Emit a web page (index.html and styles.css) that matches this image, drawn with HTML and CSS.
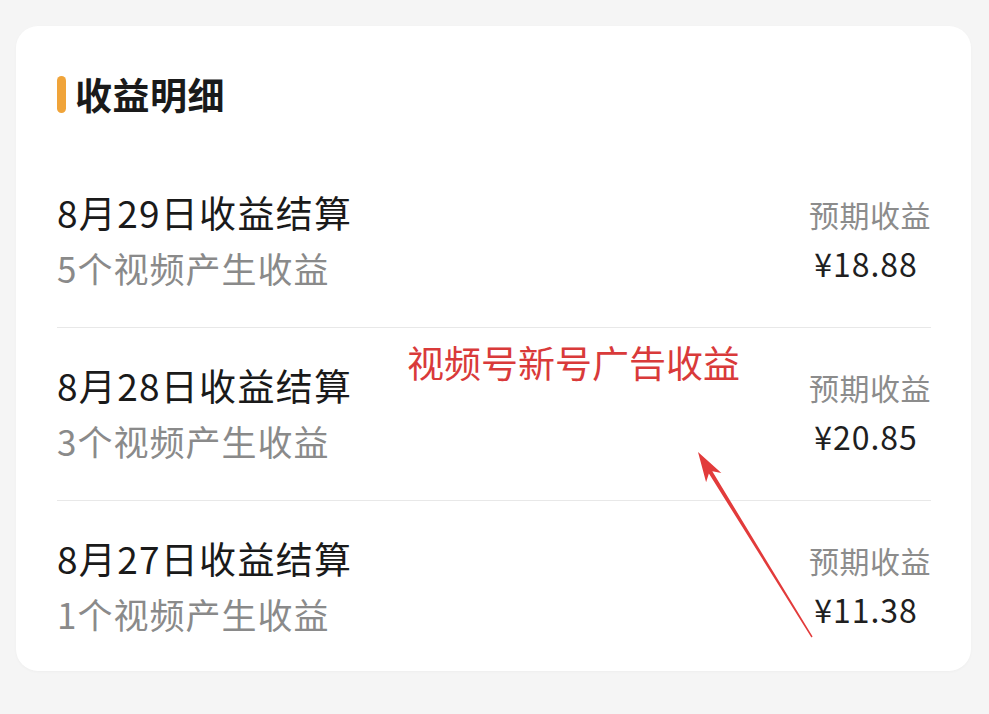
FILE: index.html
```html
<!DOCTYPE html>
<html lang="zh-CN">
<head>
    <meta charset="UTF-8">
    <meta name="viewport" content="width=device-width, initial-scale=1.0">
    <title>收益明细</title>
    <link rel="stylesheet" href="styles.css">
</head>
<body>
    <div class="page">
        <div class="card">
            <div class="card-header">
                <span class="header-bar"></span>
                <h2>收益明细</h2>
            </div>

            <div class="row">
                <div class="row-info">
                    <div class="row-title">8月29日收益结算</div>
                    <div class="row-sub">5个视频产生收益</div>
                </div>
                <div class="row-amount">
                    <div class="amount-label">预期收益</div>
                    <div class="amount-value">¥18.88</div>
                </div>
            </div>

            <div class="row">
                <div class="row-info">
                    <div class="row-title">8月28日收益结算</div>
                    <div class="row-sub">3个视频产生收益</div>
                </div>
                <div class="row-amount">
                    <div class="amount-label">预期收益</div>
                    <div class="amount-value">¥20.85</div>
                </div>
            </div>

            <div class="row">
                <div class="row-info">
                    <div class="row-title">8月27日收益结算</div>
                    <div class="row-sub">1个视频产生收益</div>
                </div>
                <div class="row-amount">
                    <div class="amount-label">预期收益</div>
                    <div class="amount-value">¥11.38</div>
                </div>
            </div>
        </div>

        <!-- annotation drawn over the screenshot -->
        <div class="note">视频号新号广告收益</div>
        <svg class="arrow" viewBox="0 0 989 714" width="989" height="714">
            <polygon fill="#e23b3b" points="698,452 721.4,472.9 712.3,471.3 812.6,636.6 811.4,637.4 708.9,473.5 706.1,482.3"/>
        </svg>
    </div>
</body>
</html>
```

FILE: styles.css
```css
html, body {
    margin: 0;
    padding: 0;
}
body {
    background-color: #f5f5f5;
    font-family: "Noto Sans CJK SC", "Noto Sans", sans-serif;
    color: #1c1c1c;
}
.page {
    position: relative;
    width: 989px;
    height: 714px;
    padding-top: 26px;
    box-sizing: border-box;
}
.card {
    margin: 0 18px 0 16px;
    background: #fff;
    border-radius: 22px;
    padding: 44px 40px 0 41px;
    box-shadow: 0 1px 3px rgba(0, 0, 0, 0.03);
}
.card-header {
    display: flex;
    align-items: center;
    gap: 9px;
    height: 48px;
    margin-bottom: 37px;
}
.header-bar {
    width: 9px;
    height: 37px;
    border-radius: 5px;
    background-color: #f0a43a;
}
.card-header h2 {
    margin: 0;
    font-size: 37px;
    line-height: 48px;
    letter-spacing: 0.5px;
    font-weight: 700;
    color: #1a1a1a;
}
.row {
    display: flex;
    justify-content: space-between;
    align-items: center;
    padding: 33px 0 35px;
    border-bottom: 1px solid #e8e8e8;
}
.row:last-child {
    border-bottom: none;
    padding-bottom: 33px;
}
.row-info {
    display: flex;
    flex-direction: column;
    gap: 8px;
}
.row-title {
    font-size: 37px;
    line-height: 48px;
    letter-spacing: 1.3px;
    color: #1a1a1a;
}
.row-sub {
    font-size: 35px;
    line-height: 48px;
    letter-spacing: 1px;
    color: #8a8a8a;
}
.row-amount {
    display: flex;
    flex-direction: column;
    align-items: center;
    gap: 5px;
    margin-bottom: 4px;
}
.amount-label {
    font-size: 30px;
    line-height: 44px;
    letter-spacing: 0.5px;
    color: #8c8c8c;
}
.amount-value {
    font-size: 32px;
    line-height: 44px;
    letter-spacing: 1px;
    color: #1f1f1f;
    padding-right: 8px;
}
.note {
    position: absolute;
    left: 407px;
    top: 340px;
    font-size: 37px;
    line-height: 44px;
    color: #d93a3a;
}
.arrow {
    position: absolute;
    left: 0;
    top: 0;
    pointer-events: none;
}
```
